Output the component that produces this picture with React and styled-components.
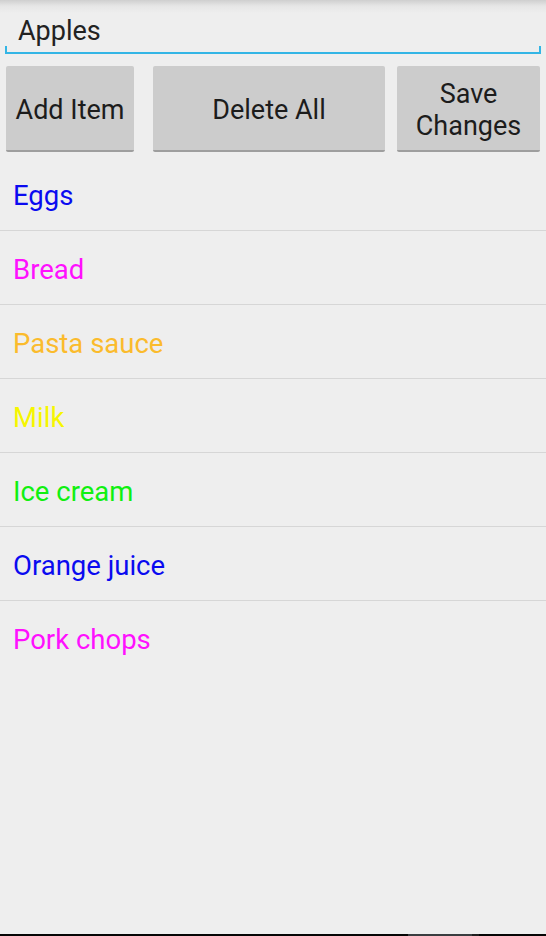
import styled, { createGlobalStyle } from "styled-components";

const GlobalStyle = createGlobalStyle`
    html, body {
        margin: 0;
        padding: 0;
        background: #eeeeee;
    }
    * {
        box-sizing: border-box;
    }
`;

const Screen = styled.div`
    display: flex;
    flex-direction: column;
    width: 546px;
    height: 936px;
    background: linear-gradient(to bottom, #cfcfcf 0px, #e6e6e6 6px, #eeeeee 13px) #eeeeee;
    font-family: Roboto, "Liberation Sans", sans-serif;
    overflow: hidden;
`;

const Field = styled.div`
    position: relative;
    margin: 0 5px;
    padding: 16px 0 0 13px;
    height: 54px;
    border-bottom: 2px solid #33b5e5;
    font-size: 27px;
    line-height: 31px;
    color: #222222;

    &::before,
    &::after {
        content: "";
        position: absolute;
        bottom: 0;
        width: 2px;
        height: 6px;
        background: #33b5e5;
    }
    &::before { left: 0; }
    &::after { right: 0; }
`;

const ButtonRow = styled.div`
    display: flex;
    margin: 12px 6px 0;
    height: 86px;
`;

const Button = styled.button`
    display: flex;
    align-items: center;
    justify-content: center;
    width: ${({ $width }) => $width}px;
    margin-left: ${({ $gap }) => $gap || 0}px;
    height: 100%;
    padding: 4px 2px 0;
    border: none;
    border-bottom: 2px solid #9e9e9e;
    border-radius: 2px;
    background: #cccccc;
    color: #1c1c1c;
    font-family: Roboto, "Liberation Sans", sans-serif;
    font-size: 27px;
    line-height: 32px;
    text-align: center;
`;

const List = styled.ul`
    list-style: none;
    margin: 5px 0 0;
    padding: 0;
    flex: 1;
`;

const Row = styled.li`
    display: flex;
    align-items: center;
    height: 74px;
    padding: 3px 0 0 13px;
    border-bottom: 1px solid #d6d6d6;
    font-size: 27.5px;
    color: ${({ $color }) => $color};

    &:last-child {
        border-bottom: none;
    }
`;

const NavStrip = styled.div`
    display: flex;
    height: 2px;
    background: #050505;
`;

const NavPart = styled.div`
    width: ${({ $width }) => $width}px;
    background: ${({ $color }) => $color};
`;

const items = [
    { name: "Eggs", color: "#0a0af0" },
    { name: "Bread", color: "#ff10ff" },
    { name: "Pasta sauce", color: "#fbbb2c" },
    { name: "Milk", color: "#f6f600" },
    { name: "Ice cream", color: "#10f010" },
    { name: "Orange juice", color: "#0a0af0" },
    { name: "Pork chops", color: "#ff10ff" },
];

export default function App() {
    return (
        <>
            <GlobalStyle />
            <Screen>
                <Field>Apples</Field>
                <ButtonRow>
                    <Button $width={128}>Add Item</Button>
                    <Button $width={232} $gap={19}>Delete All</Button>
                    <Button $width={143} $gap={12}>Save<br />Changes</Button>
                </ButtonRow>
                <List>
                    {items.map((item, i) => (
                        <Row key={i} $color={item.color}>{item.name}</Row>
                    ))}
                </List>
                <NavStrip>
                    <NavPart $width={408} $color="#050505" />
                    <NavPart $width={64} $color="#3a3d40" />
                    <NavPart $width={7} $color="#1f1f1f" />
                </NavStrip>
            </Screen>
        </>
    );
}
